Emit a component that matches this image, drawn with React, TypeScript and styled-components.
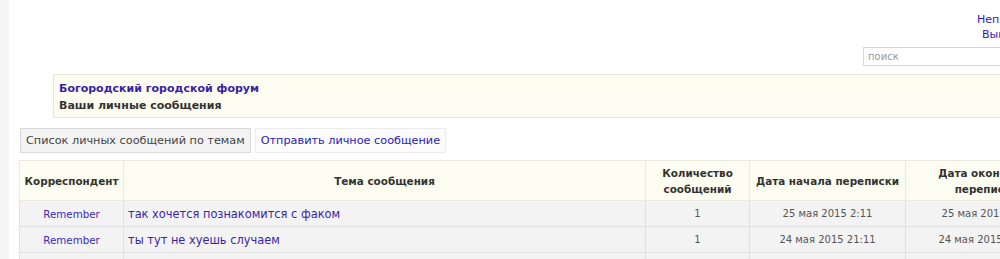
import React from 'react';
import styled, { createGlobalStyle } from 'styled-components';

const GlobalStyle = createGlobalStyle`
  html, body {
    margin: 0;
    padding: 0;
    background: #ffffff;
    overflow: hidden;
  }
  body {
    font-family: "DejaVu Sans", Verdana, sans-serif;
    color: #333;
  }
`;

const Page = styled.div`
  width: 1080px;
  min-height: 259px;
  border-left: 9px solid #f5f5f5;
  padding: 0 0 0 10px;
  box-sizing: border-box;
`;

const TopBar = styled.div`
  display: flex;
  justify-content: flex-end;
  padding-top: 13px;
  height: 34px;
  box-sizing: border-box;
`;

const UserLinks = styled.div`
  width: 103px;
  display: flex;
  flex-direction: column;
  gap: 2px;
`;

const UserLink = styled.a<{ $indent: number }>`
  font-size: 11px;
  line-height: 13px;
  color: #2b20b8;
  text-decoration: none;
  white-space: nowrap;
  padding-left: ${p => p.$indent}px;
`;

const SearchRow = styled.div`
  display: flex;
  justify-content: flex-end;
  margin-top: 13px;
`;

const SearchInput = styled.input`
  width: 217px;
  height: 19px;
  box-sizing: border-box;
  border: 1px solid #d6d6d6;
  padding: 0 4px;
  font-family: "DejaVu Sans", Verdana, sans-serif;
  font-size: 10px;
  color: #555;
  &::placeholder {
    color: #999;
  }
`;

const ForumBox = styled.div`
  margin: 8px 0 0 34px;
  height: 44px;
  box-sizing: border-box;
  background: #fdfdf1;
  border: 1px solid #e6e6d4;
  padding: 7px 5px 0;
  display: flex;
  flex-direction: column;
  gap: 3px;
`;

const ForumTitle = styled.a`
  font-size: 11px;
  line-height: 14px;
  font-weight: bold;
  color: #3b1fa3;
  text-decoration: none;
`;

const SectionTitle = styled.div`
  font-size: 11px;
  line-height: 14px;
  font-weight: bold;
  color: #333;
`;

const Tabs = styled.div`
  display: flex;
  gap: 4px;
  margin: 10px 0 0 1px;
`;

const Tab = styled.a<{ $active?: boolean }>`
  display: flex;
  align-items: center;
  height: 25px;
  box-sizing: border-box;
  padding: 0 5px;
  font-size: 11.25px;
  text-decoration: none;
  background: ${p => (p.$active ? '#f3f3f3' : '#fbfbfb')};
  border: 1px solid ${p => (p.$active ? '#d9d9d9' : '#ececec')};
  color: ${p => (p.$active ? '#444' : '#2b20b8')};
`;

const Table = styled.table`
  margin-top: 7px;
  border-collapse: collapse;
  width: 1048px;
  table-layout: fixed;
`;

const Th = styled.th<{ $width: number }>`
  width: ${p => p.$width}px;
  height: 40px;
  padding: 0 4px;
  background: #fdfdf1;
  border: 1px solid #ebebdc;
  font-size: 10.4px;
  line-height: 16px;
  font-weight: bold;
  color: #333;
  text-align: center;
  box-sizing: border-box;
`;

const Td = styled.td<{ $align?: 'left' | 'center' }>`
  height: 26px;
  padding: 0 4px;
  background: #f3f3f3;
  border: 1px solid #e0e0e0;
  text-align: ${p => p.$align || 'center'};
  font-size: 10px;
  color: #555;
  box-sizing: border-box;
  white-space: nowrap;
  overflow: hidden;
`;

const AuthorLink = styled.a`
  font-size: 10.3px;
  color: #3b2bb3;
  text-decoration: none;
`;

const TopicLink = styled.a`
  font-size: 11.4px;
  color: #3b1fa3;
  text-decoration: none;
`;

const conversations = [
  { author: 'Remember', topic: 'так хочется познакомится с факом', count: 1, start: '25 мая 2015 2:11', end: '25 мая 2015 2:11' },
  { author: 'Remember', topic: 'ты тут не хуешь случаем', count: 1, start: '24 мая 2015 21:11', end: '24 мая 2015 21:11' },
  { author: 'Remember', topic: 'привет', count: 1, start: '24 мая 2015 20:40', end: '24 мая 2015 20:40' },
];

export default function App() {
  return (
    <>
      <GlobalStyle />
      <Page>
        <TopBar>
          <UserLinks>
            <UserLink href="#" $indent={0}>Непрочитанные</UserLink>
            <UserLink href="#" $indent={5}>Выйти</UserLink>
          </UserLinks>
        </TopBar>
        <SearchRow>
          <SearchInput placeholder="поиск" />
        </SearchRow>
        <ForumBox>
          <ForumTitle href="#">Богородский городской форум</ForumTitle>
          <SectionTitle>Ваши личные сообщения</SectionTitle>
        </ForumBox>
        <Tabs>
          <Tab href="#" $active>Список личных сообщений по темам</Tab>
          <Tab href="#">Отправить личное сообщение</Tab>
        </Tabs>
        <Table>
          <thead>
            <tr>
              <Th $width={104}>Корреспондент</Th>
              <Th $width={522}>Тема сообщения</Th>
              <Th $width={104}>Количество сообщений</Th>
              <Th $width={156}>Дата начала переписки</Th>
              <Th $width={162}>Дата окончания переписки</Th>
            </tr>
          </thead>
          <tbody>
            {conversations.map((c, i) => (
              <tr key={i}>
                <Td><AuthorLink href="#">{c.author}</AuthorLink></Td>
                <Td $align="left"><TopicLink href="#">{c.topic}</TopicLink></Td>
                <Td>{c.count}</Td>
                <Td>{c.start}</Td>
                <Td>{c.end}</Td>
              </tr>
            ))}
          </tbody>
        </Table>
      </Page>
    </>
  );
}
